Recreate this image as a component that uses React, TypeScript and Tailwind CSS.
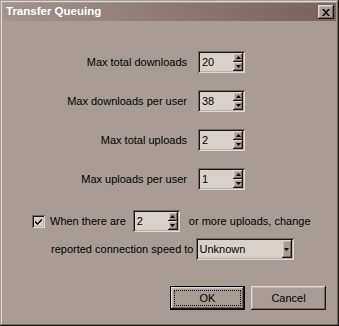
import React from "react";

// Win9x style bevels, tinted to the taupe theme of the screenshot
const raised =
  "shadow-[inset_-1px_-1px_0_#1c1512,inset_1px_1px_0_#e2d8d1,inset_-2px_-2px_0_#76665f,inset_2px_2px_0_#c2b6ae]";
const sunken =
  "shadow-[inset_1px_1px_0_#76665f,inset_-1px_-1px_0_#e2d8d1,inset_2px_2px_0_#1c1512,inset_-2px_-2px_0_#bcafa7]";

const Arrow = ({ down = false }: { down?: boolean }) => (
  <svg width="5" height="3" viewBox="0 0 5 3" className="block">
    <polygon points={down ? "0,0 5,0 2.5,3" : "2.5,0 5,3 0,3"} fill="#000" />
  </svg>
);

const Spinner = ({ value }: { value: string }) => (
  <div className={`flex h-[22px] w-[47px] bg-[#d9d0c9] p-[2px] ${sunken}`}>
    <span className="flex-1 pl-[2px] leading-[18px]">{value}</span>
    <div className="flex w-[10px] flex-col">
      <div className={`flex flex-1 items-center justify-center bg-[#a99c94] ${raised}`}>
        <Arrow />
      </div>
      <div className={`flex flex-1 items-center justify-center bg-[#a99c94] ${raised}`}>
        <Arrow down />
      </div>
    </div>
  </div>
);

const rows = [
  { label: "Max total downloads", value: "20" },
  { label: "Max downloads per user", value: "38" },
  { label: "Max total uploads", value: "2" },
  { label: "Max uploads per user", value: "1" },
];

export default function App() {
  return (
    <div
      className={`flex h-[326px] w-[339px] flex-col bg-[#a99c94] p-[3px] text-[11px] text-black shadow-[inset_-1px_-1px_0_#1c1512,inset_1px_1px_0_#a99c94,inset_-2px_-2px_0_#76665f,inset_2px_2px_0_#e2d8d1]`}
      style={{ fontFamily: '"Liberation Sans", Arial, sans-serif' }}
    >
      {/* Title bar */}
      <div className="flex h-[18px] items-center justify-between bg-gradient-to-r from-[#a3938b] to-[#79625c] pl-[3px] pr-[2px]">
        <span className="text-[11.5px] font-bold text-white">Transfer Queuing</span>
        <button
          className={`flex h-[14px] w-[16px] items-center justify-center bg-[#a99c94] ${raised}`}
        >
          <svg width="8" height="7" viewBox="0 0 8 7">
            <path d="M0 0h2l2 2.5L6 0h2L5 3.5 8 7H6L4 4.5 2 7H0l3-3.5z" fill="#000" />
          </svg>
        </button>
      </div>

      {/* Limits */}
      <div className="mt-[30px] flex flex-col gap-[17px]">
        {rows.map((r) => (
          <div key={r.label} className="flex h-[22px] items-center">
            <span className="w-[195px] pr-[11px] text-right">{r.label}</span>
            <Spinner value={r.value} />
          </div>
        ))}
      </div>

      {/* Upload speed rule */}
      <div className="mt-[20px] flex h-[22px] items-center pl-[29px]">
        <div className={`flex h-[13px] w-[13px] items-center justify-center bg-[#d9d0c9] ${sunken}`}>
          <svg width="7" height="7" viewBox="0 0 7 7">
            <path d="M0 2.5l2.5 2.5L7 0.5v2L2.5 7 0 4.5z" fill="#000" />
          </svg>
        </div>
        <span className="ml-[5px]">When there are</span>
        <div className="ml-[7px]">
          <Spinner value="2" />
        </div>
        <span className="ml-[9px]">or more uploads, change</span>
      </div>
      <div className="mt-[6px] flex h-[22px] items-center pl-[48px]">
        <span>reported connection speed to</span>
        <div className={`ml-[2px] flex h-[22px] w-[98px] bg-[#d9d0c9] p-[2px] ${sunken}`}>
          <span className="flex-1 pl-[2px] leading-[18px]">Unknown</span>
          <div className={`flex w-[10px] items-center justify-center bg-[#a99c94] ${raised}`}>
            <Arrow down />
          </div>
        </div>
      </div>

      {/* Buttons */}
      <div className="mt-[26px] flex justify-end gap-[6px] pr-[10px]">
        <button className="h-[24px] w-[75px] border border-black bg-[#a99c94]">
          <div className={`flex h-full w-full items-center justify-center p-[3px] ${raised}`}>
            <div className="flex h-full w-full items-center justify-center border border-dotted border-black">
              OK
            </div>
          </div>
        </button>
        <button className={`h-[24px] w-[75px] bg-[#a99c94] ${raised}`}>Cancel</button>
      </div>
    </div>
  );
}
